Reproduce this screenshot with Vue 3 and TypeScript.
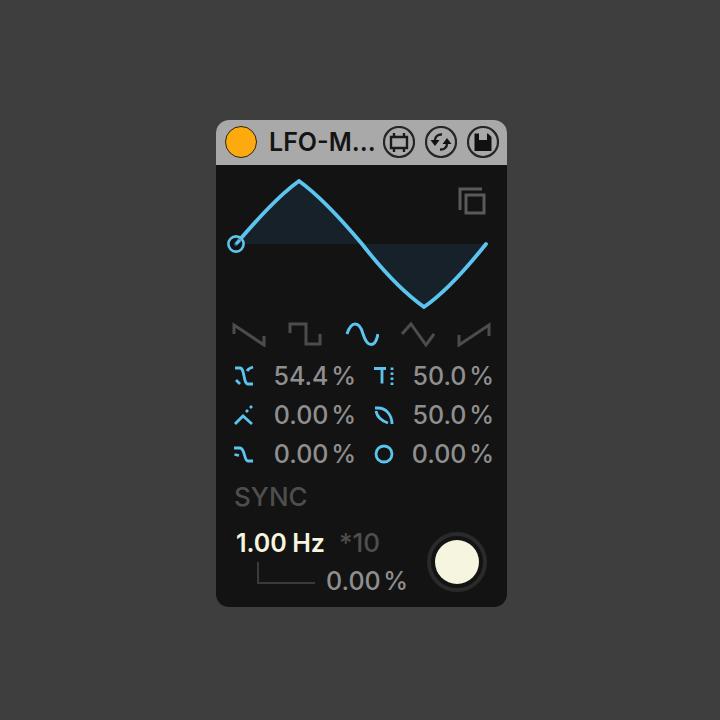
<template>
  <div class="page">
    <div class="device">
      <!-- Title bar -->
      <header class="titlebar">
        <span class="power"></span>
        <span class="title">LFO-M...</span>
        <div class="tools">
          <button v-for="tool in tools" :key="tool.name" class="tool" :title="tool.name">
            <svg viewBox="0 0 32 32" width="32" height="32" fill="none" stroke="#1a1a1a" stroke-width="2.4">
              <circle cx="16" cy="16" r="15" stroke="#262626" stroke-width="2.2" />
              <path v-for="(d, i) in tool.strokes" :key="i" :d="d" />
              <path v-if="tool.fill" :d="tool.fill" fill="#111111" stroke="none" fill-rule="evenodd" />
            </svg>
          </button>
        </div>
      </header>

      <!-- Waveform -->
      <div class="display">
        <svg class="wave" viewBox="0 0 291 150" width="291" height="150" fill="none">
          <path :d="wavePath + ' Z'" fill="#17212a" />
          <path :d="wavePath" stroke="#5cc5ef" stroke-width="3.8" stroke-linejoin="miter" stroke-linecap="round" />
          <circle cx="20" cy="79" r="7.6" fill="#141414" fill-opacity="0.55" stroke="#5cc5ef" stroke-width="2.6" />
          <path d="M20 79 L24 75" stroke="#5cc5ef" stroke-width="3" />
        </svg>
        <svg class="copy" viewBox="0 0 30 30" width="30" height="30" fill="none" stroke="#5a5a5a" stroke-width="3">
          <path d="M3 24 V3 H25" />
          <rect x="9" y="9" width="18" height="18" />
        </svg>
      </div>

      <!-- Shape selector -->
      <div class="shapes">
        <svg v-for="shape in shapes" :key="shape.name" viewBox="0 0 34 26" width="34" height="26" fill="none"
             :stroke="shape.active ? '#5cc5ef' : '#4c4c4c'" stroke-width="3">
          <path :d="shape.d" />
        </svg>
      </div>

      <!-- Parameters -->
      <div class="params">
        <div v-for="param in params" :key="param.name" class="param">
          <svg viewBox="0 0 22 22" width="22" height="22" fill="none" stroke="#5cc5ef" stroke-width="2.8">
            <path :d="param.icon" />
          </svg>
          <span class="value">{{ param.value }}</span>
        </div>
      </div>

      <div class="sync">SYNC</div>

      <!-- Rate and knob -->
      <div class="rate">
        <div class="rate-text">
          <div class="rate-main">
            <span class="hz">1.00 Hz</span>
            <span class="mult">*10</span>
          </div>
          <div class="rate-sub">
            <span class="elbow"></span>
            <span class="value sub-value">0.00 %</span>
          </div>
        </div>
        <span class="knob"><span class="knob-face"></span></span>
      </div>
    </div>
  </div>
</template>

<script setup lang="ts">
interface Tool { name: string; strokes: string[]; fill?: string }
interface Shape { name: string; d: string; active?: boolean }
interface Param { name: string; value: string; icon: string }

const wavePath =
  'M20 79 C40 56 62 31 83 16 C104 31 125 54 146 79 C167 106 187 127 208 142 C230 127 250 104 270 79'

const tools: Tool[] = [
  { name: 'Map', strokes: ['M8 11 H24 V22 H8 Z', 'M11 7 V11 M21 7 V11 M11 22 V26 M21 22 V26'] },
  {
    name: 'Loop',
    strokes: ['M10 14 C10 11 13 8 17 8.500', 'M22 18 C22 21 19 24 15 23.500'],
    fill: 'M5.500 14 H14.500 L10 20 Z M17.500 18 H26.500 L22 12 Z',
  },
  {
    name: 'Save',
    strokes: [],
    fill: 'M7.500 7.500 H21 L24.500 11 V25 H7.500 Z M12 7.500 H20 V14 H12 Z',
  },
]

const shapes: Shape[] = [
  { name: 'Saw down', d: 'M2 13 V4 L32 24 V15' },
  { name: 'Square', d: 'M2 12 V3 H18 V23 H32 V13' },
  { name: 'Sine', d: 'M2 13 C4 7 6 3 10 3 C15 3 17 9 18 13 C20 19 22 23.500 26 23.500 C30 23.500 32 18 33 13', active: true },
  { name: 'Triangle', d: 'M1 13 L10 3 L25 24 L33 13' },
  { name: 'Saw up', d: 'M2 14 V24 L32 4 V15' },
]

const params: Param[] = [
  { name: 'Jitter', value: '54.4 %', icon: 'M3 3 H8 C13 3 11 19 16 19 H21 M4 15 L8 19 M15 6 C16 4 18 3 21 2' },
  { name: 'Width', value: '50.0 %', icon: 'M1 3.500 H13 M9 3.500 V18.500 M19 2.500 V5 M19 7.500 V10 M19 12.500 V15 M19 17.500 V20' },
  { name: 'Smooth', value: '0.00 %', icon: 'M3 20 L11 12 L20 20 M14 8 L16 6 M18 4 L20 2' },
  { name: 'Shape', value: '50.0 %', icon: 'M2 4 H5 C13 4 19 11 19 20 M3 7 C4 13 9 17 15 19' },
  { name: 'Curve', value: '0.00 %', icon: 'M2 5 H8 C13 5 12 18 16 18 H21 M2.500 11.500 L7 12.500' },
  { name: 'Phase', value: '0.00 %', icon: 'M11 3 A8 8 0 1 0 11 19 A8 8 0 1 0 11 3 Z' },
]
</script>

<style>
html,
body {
  margin: 0;
  background: #3e3e3e;
}
</style>

<style scoped>
.page {
  width: 720px;
  height: 720px;
  padding: 120px 0 0 216px;
  box-sizing: border-box;
  background: #3e3e3e;
  font-family: Inter, "Liberation Sans", sans-serif;
}

.device {
  width: 291px;
  height: 487px;
  background: #131313;
  border-radius: 13px;
  overflow: hidden;
}

.titlebar {
  height: 45px;
  background: #a9a9a9;
  display: flex;
  align-items: center;
  padding: 0 8px 1px 9px;
  box-sizing: border-box;
}

.power {
  width: 32px;
  height: 32px;
  border-radius: 50%;
  background: #fdaa0f;
  border: 1.500px solid #2a2412;
  box-sizing: border-box;
  flex: none;
}

.title {
  margin-left: 12px;
  font-size: 25px;
  font-weight: 600;
  color: #141414;
  white-space: nowrap;
  flex: 1;
}

.tools {
  display: flex;
  gap: 10px;
}

.tool {
  width: 32px;
  height: 32px;
  padding: 0;
  border: 0;
  background: none;
}

.tool svg {
  display: block;
}

.display {
  position: relative;
  height: 150px;
}

.wave {
  display: block;
}

.copy {
  position: absolute;
  top: 21px;
  left: 241px;
}

.shapes {
  display: flex;
  justify-content: space-between;
  padding: 6px 16px 0 16px;
}

.shapes svg {
  display: block;
}

.params {
  display: grid;
  grid-template-columns: 124px 121px;
  grid-auto-rows: 39px;
  margin-top: 9px;
  padding-left: 16px;
  column-gap: 17px;
}

.param {
  display: flex;
  align-items: center;
  justify-content: space-between;
}

.value {
  font-size: 25px;
  font-weight: 500;
  word-spacing: -4px;
  color: #8f8f8f;
  white-space: nowrap;
}

.sync {
  margin: 8px 0 0 18px;
  font-size: 26px;
  font-weight: 500;
  color: #4e4e4e;
}

.rate {
  display: flex;
  align-items: center;
  justify-content: space-between;
  padding: 15px 20px 0 20px;
}

.rate-main {
  display: flex;
  align-items: baseline;
  gap: 14px;
}

.hz {
  font-size: 25px;
  font-weight: 600;
  word-spacing: -1px;
  color: #f6f5df;
}

.mult {
  font-size: 26px;
  font-weight: 500;
  color: #4e4e4e;
}

.rate-sub {
  display: flex;
  align-items: flex-start;
  margin-top: 4px;
  padding-left: 21px;
}

.elbow {
  width: 56px;
  height: 20px;
  border-left: 2px solid #3a3a3a;
  border-bottom: 2px solid #3a3a3a;
  margin-right: 11px;
}

.sub-value {
  margin-top: 4px;
}

.knob {
  width: 60px;
  height: 60px;
  border-radius: 50%;
  border: 4px solid #2a2a2a;
  box-sizing: border-box;
  display: flex;
  align-items: center;
  justify-content: center;
}

.knob-face {
  width: 44px;
  height: 44px;
  border-radius: 50%;
  background: #f6f5df;
}
</style>
